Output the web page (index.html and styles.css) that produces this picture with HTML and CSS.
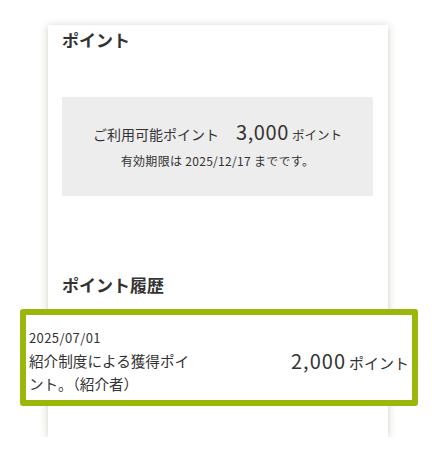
FILE: index.html
```html
<!DOCTYPE html>
<html lang="ja">
<head>
<meta charset="utf-8">
<link rel="stylesheet" href="styles.css">
</head>
<body>
<div class="card">
  <h2 class="title">ポイント</h2>
  <div class="summary">
    <div class="avail">
      <span class="avail-label">ご利用可能ポイント</span>
      <span class="avail-num">3,000</span><span class="avail-unit">ポイント</span>
    </div>
    <div class="expire">有効期限は 2025/12/17 までです。</div>
  </div>
  <h2 class="title history-title">ポイント履歴</h2>
  <div class="history-item">
    <div class="date">2025/07/01</div>
    <div class="row">
      <div class="desc">紹介制度による獲得ポイント。（紹介者）</div>
      <div class="pts"><span class="pts-num">2,000</span><span class="pts-unit">ポイント</span></div>
    </div>
  </div>
</div>
</body>
</html>
```

FILE: styles.css
```css
html, body {
  margin: 0;
  padding: 0;
  background: #fff;
}
body {
  font-family: "Noto Sans CJK JP", "Noto Sans", sans-serif;
  color: #333;
  padding: 25px 0 0 48px;
}
.card {
  width: 340px;
  height: 412px;
  box-sizing: border-box;
  background: #fff;
  box-shadow: 0 1px 8px rgba(90, 85, 60, 0.3);
  padding: 2px 15px 0 14px;
}
.title {
  margin: 0;
  font-size: 17px;
  font-weight: bold;
  line-height: 26px;
  color: #333;
}
.summary {
  margin-top: 44px;
  background: #ededed;
  height: 99px;
  box-sizing: border-box;
  padding-top: 21px;
  text-align: center;
}
.avail {
  display: flex;
  justify-content: center;
  align-items: baseline;
  line-height: 28px;
}
.avail-label {
  font-size: 14px;
  margin-right: 17px;
}
.avail-num {
  font-size: 20px;
  letter-spacing: 0.6px;
  margin-right: 3px;
}
.avail-unit {
  font-size: 12.5px;
}
.expire {
  font-size: 12px;
  line-height: 16px;
  margin-top: 4px;
  letter-spacing: 0.3px;
}
.history-title {
  margin-top: 76px;
}
.history-item {
  margin: 11px -45px 0 -42px;
  border: 6px solid #9ab80a;
  border-radius: 3px;
  padding: 12px 3px 5px 3px;
  background: #fff;
}
.date {
  font-size: 13px;
  letter-spacing: 0.4px;
  line-height: 22px;
}
.row {
  display: flex;
  justify-content: space-between;
  align-items: flex-start;
}
.desc {
  width: 172px;
  font-size: 14.6px;
  line-height: 23px;
}
.pts {
  display: flex;
  align-items: baseline;
  line-height: 23px;
}
.pts-num {
  font-size: 20px;
  letter-spacing: 1px;
  margin-right: 3px;
}
.pts-unit {
  font-size: 15px;
}
```
